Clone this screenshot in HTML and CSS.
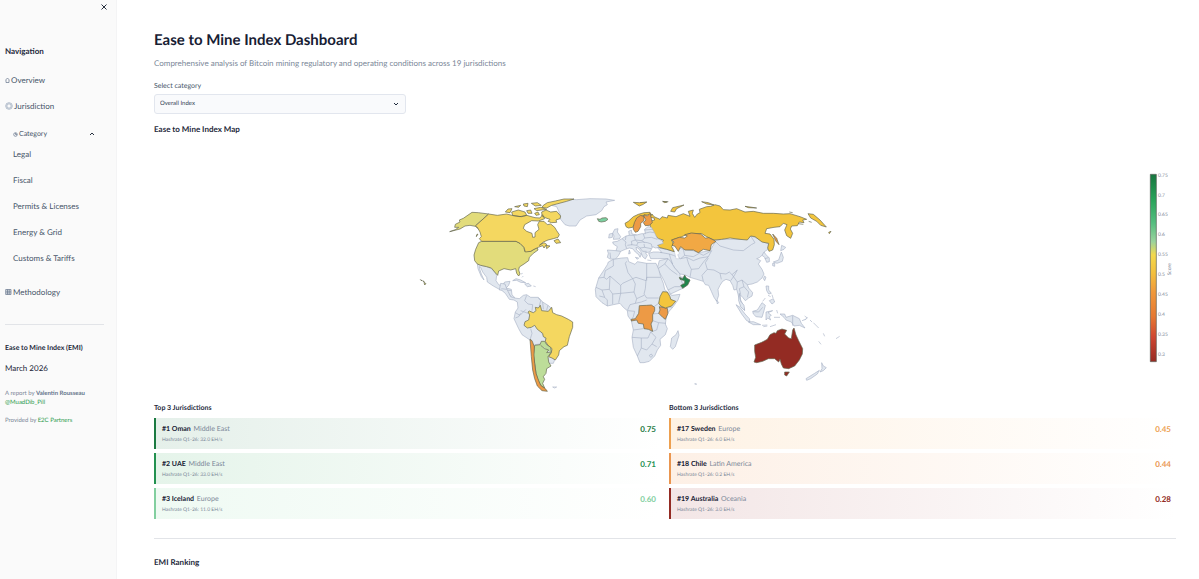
FILE: index.html
```html
<!DOCTYPE html>
<html lang="en">
<head>
<meta charset="utf-8">
<title>Ease to Mine Index Dashboard</title>
<link rel="stylesheet" href="styles.css">
</head>
<body>
<div class="app">
<aside class="sidebar">
  <button class="close" type="button" aria-label="Close sidebar"><svg viewBox="0 0 8 8" width="8" height="8"><path d="M1.5 1.5 6.5 6.5M6.5 1.5 1.5 6.5"/></svg></button>
  <h2 class="side-title">Navigation</h2>
  <nav class="nav">
    <a href="#overview"><svg class="ico" viewBox="0 0 5 8" width="5" height="8"><path d="M.5 4.2 2.5 2l2 2.200M1 4v2.500h3V4"/></svg>Overview</a>
    <a href="#jurisdiction"><svg class="ico ring" viewBox="0 0 8 8" width="8" height="8"><circle cx="4" cy="4" r="3.300"/><circle cx="4" cy="4" r="2.200"/></svg>Jurisdiction</a>
    <details class="group" open>
      <summary><svg class="ico" viewBox="0 0 5 8" width="5" height="8"><circle cx="2.500" cy="4.500" r="1.800"/><path d="M2.500 3v1.500h1.500"/></svg>Category<svg class="chev" viewBox="0 0 6 6" width="6" height="6"><path d="M1 4 3 2l2 2"/></svg></summary>
      <a href="#legal">Legal</a>
      <a href="#fiscal">Fiscal</a>
      <a href="#permits">Permits &amp; Licenses</a>
      <a href="#energy">Energy &amp; Grid</a>
      <a href="#customs">Customs &amp; Tariffs</a>
    </details>
    <a href="#methodology"><svg class="ico" viewBox="0 0 7 8" width="7" height="8"><path d="M.7 1.500h5.300v5H.7zM2.500 1.500v5M4.200 1.500v5M.7 3.200H6M.7 4.900H6"/></svg>Methodology</a>
  </nav>
  <hr>
  <p class="about"><strong>Ease to Mine Index (EMI)</strong></p>
  <p class="about">March 2026</p>
  <p class="credit">A report by <b>Valentin Rousseau</b><br><a href="#author">@MuadDib_Pill</a></p>
  <p class="credit provided">Provided by <a href="#partners">E2C Partners</a></p>
</aside>

<main class="main">
  <h1>Ease to Mine Index Dashboard</h1>
  <p class="lead">Comprehensive analysis of Bitcoin mining regulatory and operating conditions across 19 jurisdictions</p>
  <label class="label" for="category">Select category</label>
  <div class="select">
    <select id="category"><option>Overall Index</option></select>
    <svg viewBox="0 0 6 6" width="6" height="6"><path d="M1 2l2 2 2-2"/></svg>
  </div>
  <h2 class="section">Ease to Mine Index Map</h2>

  <svg class="map" viewBox="462 420 3066 774" role="img" aria-label="World map of index scores">
    <defs>
      <linearGradient id="scale" x1="0" y1="0" x2="0" y2="1">
        <stop offset="0" stop-color="#17753f"/><stop offset=".13" stop-color="#27a258"/><stop offset=".26" stop-color="#55be7f"/><stop offset=".36" stop-color="#9bd39d"/><stop offset=".43" stop-color="#f3d94d"/><stop offset=".53" stop-color="#f3bf3d"/><stop offset=".63" stop-color="#f0983b"/><stop offset=".76" stop-color="#e67832"/><stop offset=".87" stop-color="#cf4631"/><stop offset="1" stop-color="#962a22"/>
      </linearGradient>
    </defs>

    <!-- Asia -->
    <g transform="translate(1920 570)">
      <path class="land" d="M48 168 60 175 80 178 102 184 112 172 130 178 160 182 175 188 210 182 228 152 245 148 300 148 332 138 350 144 372 156 386 162 384 178 372 186 378 194 388 204 388 215 380 217 374 202 366 196 358 203 350 206 362 212 355 222 366 238 372 252 366 264 352 276 336 282 322 284 326 294 338 308 336 318 326 324 316 332 308 322 300 314 302 330 308 342 314 360 304 350 298 332 294 312 290 298 282 300 278 286 270 272 258 268 248 274 240 286 234 298 236 316 230 334 222 322 214 304 206 286 196 284 190 274 170 268 150 262 134 254 120 252 104 234 92 214 82 206 52 206 32 206 26 190 40 186 56 186 66 188Z"/>
      <path class="land" d="M58 212 84 206 92 214 104 234 120 252 120 260 130 262 150 270 142 285 128 295 92 312 84 300 72 272 60 250 52 234Z"/>
      <path class="line" d="M60 187 88 192 92 206M88 192 100 196 122 206 140 202 160 212 180 204 205 200 215 182M92 206 98 222M150 262 154 238 146 222 140 202M154 238 176 236 192 214 205 200M190 274 186 256 202 238 196 218 205 204M202 238 222 240 240 250 258 252 268 246 276 254 292 240 282 258 272 272M240 250 244 268M222 150 240 168 280 180 310 182 334 164 345 158 332 138M130 178 134 196 160 200 178 190 190 196 215 182M276 254 292 276 290 298M292 276 306 270 322 284M306 270 312 290 326 306 322 322M312 290 298 296 302 314M366 196 372 186M374 206 385 203M54 236 74 222 92 240 112 254M74 222 84 206M84 300 104 290 128 290M120 262 128 282M178 190 170 178M134 196 122 206"/>
      <path class="sea" d="M98 174 106 166 116 172 112 180 119 190 113 194 118 206 108 206 105 192Z"/>
      <path class="c yl" d="M36 72 42 80 60 88 66 80 82 84 84 76 108 80 130 71 150 79 145 64 160 60 157 70 164 82 172 72 180 68 178 58 200 50 212 49 225 44 240 48 250 59 270 60 290 56 315 66 340 64 370 70 400 70 430 72 450 71 480 80 500 88 488 90 492 98 478 96 472 107 455 108 451 117 458 130 452 145 440 137 434 120 441 104 430 100 420 110 402 112 380 116 375 130 390 132 402 148 403 164 398 180 387 184 383 174 386 160 366 156 345 140 332 138 322 150 300 148 270 144 245 148 222 150 200 140 185 131 150 130 125 140 95 150 100 162 95 170 103 185 80 178 60 173 48 168 65 160 70 150 55 146 42 132 32 112 28 96 36 92 44 90 42 84 30 82Z"/>
      <path class="c yl" d="M92 64 98 53 132 45 110 56 104 66ZM185 35 205 38 222 45 200 42ZM315 49 330 51 350 54 325 53ZM504 71 520 73 540 90 559 111 542 106 530 94 512 84ZM506 94 515 97M475 101 490 103M448 66 458 68M0 38 20 37M68 34 82 36 74 38ZM566 127 573 124 568 131Z"/>
      <path class="c or" d="M398 132 410 145 417 164 408 154Z"/>
      <path class="c kz" d="M95 150 118 142 134 144 142 138 134 134 155 129 182 132 196 144 206 143 228 154 214 164 210 182 190 178 175 188 160 180 135 180 122 170 115 184 104 168 96 166 102 156Z"/>
      <path class="c om" d="M118 262 128 266 134 255 139 264 150 270 143 285 128 295 122 286 134 280 134 272 120 268Z"/>
      <path class="land" d="M425 166 437 172 432 178 422 182ZM424 186 430 202 427 214 411 220 400 216 416 210ZM398 220 404 220 404 229 398 227ZM374 258 378 262 374 272 370 266Z"/>
    </g>

    <!-- Europe and Greenland -->
    <g transform="translate(1710 570)">
      <path class="land" d="M0 28-30 34-60 38-56 46-40 50-30 72-28 88-15 104-2 108 18 108 30 90 50 78 78 74 95 62 102 50 112 44 108 36 134 31 108 27 60 26 20 29Z"/>
      <path class="c ic" d="M82 86 90 88 96 84 108 83 114 88 106 94 94 96 86 94Z"/>
      <path class="c yl" d="M190 37 208 38 230 36 220 43 208 48ZM278 35 295 35M165 100 175 94 190 80 205 73 222 68 240 67 244 74 225 75 210 80 198 92 193 104 188 112 175 114 168 110Z"/>
      <path class="c or" d="M190 110 193 98 200 84 212 76 222 80 222 92 212 100 212 110 204 124 196 127 190 118ZM222 74 232 78 240 70 244 85 247 98 238 106 226 107 220 98 228 90 222 80Z"/>
      <path class="land" d="M112 180 138 182 142 170 130 162 128 156 142 154 156 146 168 138 178 136 176 124 184 120 186 132 200 135 215 131 226 131 224 118 234 110 244 112 252 125 262 145 276 152 280 160 262 166 268 172 256 174 248 170 243 180 240 186 226 188 232 196 226 207 218 200 212 184 204 174 198 172 200 180 214 192 210 202 206 194 196 186 188 176 178 174 166 178 152 184 146 196 136 208 120 207 112 202 115 190ZM130 148 132 138 128 130 134 118 144 116 142 126 152 140 148 147ZM118 132 128 130 127 142 116 144ZM178 180 181 190 176 192ZM196 202 206 204 202 208ZM232 210 244 212"/>
      <path class="line" d="M138 182 152 184M120 188 122 205M156 146 168 156 166 164 170 176M168 138 166 150M178 136 192 136 196 150 184 154 186 164 172 166M192 136 200 134M196 150 216 152 224 144 220 132M196 150 204 158 218 156 232 158 244 162 246 172M184 164 200 166 204 158M200 166 210 174 224 172 222 162M224 144 244 142 262 148M224 130 240 126 252 128M222 120 248 118M224 172 244 176M216 152 224 158M210 174 218 184 230 184"/>
    </g>

    <!-- Africa -->
    <g transform="translate(1740 750)">
      <path class="land" d="M85 36 100 28 125 24 143 23 146 35 165 43 172 35 200 40 228 40 236 58 242 80 250 100 254 118 266 130 276 136 300 133 294 150 278 172 262 190 258 208 256 222 262 236 256 254 240 268 242 286 232 300 224 318 208 334 192 338 180 338 172 318 160 292 156 262 160 240 154 212 144 198 142 182 130 172 120 160 100 164 82 168 66 158 48 140 46 118 56 84 72 60 82 44ZM275 264 288 254 294 242 297 256 286 290 278 298 271 290ZM344 401 350 402"/>
      <path class="line" d="M56 84 72 82 76 62 100 48 100 28M72 82 80 88 90 78 122 106 128 100 158 86 144 68 136 40 140 34M90 78 88 118 66 120 48 112M158 86 168 82 198 92 200 84V40M200 92 200 82H242M198 92 196 116 192 132 200 144 236 144M158 86 166 102 162 126 170 146 166 160 150 164 142 182M162 126 122 130 122 106M122 130 116 158M88 118 98 132 98 162M66 120 74 142 82 150 82 168M98 132 122 130M58 138 74 142M170 146 192 136M166 160 184 156 200 150M222 170 236 160M218 192 238 190 256 208M218 212 236 218 258 220M156 262 184 264 204 264 212 246 230 240 236 218M184 264 184 294 172 318M184 294 200 300 216 282 228 262 212 246M216 282 230 290M160 240 190 236M144 182 164 184 160 200 154 210M242 168 278 172M208 316 214 312 218 318 212 322Z"/>
      <path class="c or" d="M178 167 200 166 214 165 224 172 224 182 218 194 218 212 213 222 218 244 205 238 192 236 190 222 175 220 170 210 154 213 154 208 166 206 176 190ZM238 170 262 175 264 190 256 208 248 202 236 190 240 180Z"/>
      <path class="c yl" d="M236 160 240 140 248 125 262 126 270 140 272 148 287 154 275 168 256 174 242 168Z"/>
    </g>

    <!-- North America -->
    <g transform="translate(1230 570)">
      <path class="land" d="M202 222 212 226 230 230 244 236 254 246 260 256 258 272 266 284 276 288 284 276 300 274 296 286 288 294 304 298 306 315 314 322 308 328 296 310 285 304 268 298 250 288 232 276 230 262 218 246 212 232 208 230 210 240 214 252 222 270 214 260 204 236ZM308 272 318 266 332 270 347 278 332 277 320 271ZM344 282 356 280 364 288 352 290ZM370 288 377 290M333 252 338 250M336 262 340 258"/>
      <path class="line" d="M272 297 276 290 288 288M288 300 304 302"/>
      <path class="c us" d="M236 72 205 68 186 67 160 85 148 90 150 96 136 103 134 112 146 112 136 119 119 125 150 117 165 108 180 106 196 109 212 122 198 106ZM215 154 318 154 330 160 342 172 344 184 362 184 372 178 382 173 384 180 370 190 358 202 356 212 342 222 328 231 326 240 330 252 326 258 320 250 317 236 302 240 282 236 266 243 263 256 254 246 244 234 230 230 212 226 202 222 194 212 192 195 197 178 206 158ZM31 269 36 272 33 271ZM38 272 43 275 40 275ZM42 277 48 281 44 285Z"/>
      <path class="c ca" d="M236 72 262 76 290 72 310 77 335 80 350 76 375 83 390 84 398 74 404 86 385 93 365 92 344 104 340 115 350 124 366 130 368 142 375 141 375 128 387 118 383 104 388 94 402 94 412 104 422 102 434 112 440 122 448 134 444 142 430 146 414 150 400 156 388 166 402 158 410 163 402 174 398 167 385 172 372 178 362 184 346 186 342 172 330 160 318 154 215 154 208 146 214 140 210 126 202 112 196 108ZM395 66 408 60 422 66 440 64 452 78 450 86 438 90 440 97 424 98 414 94 420 88 408 84 396 78ZM305 66 325 60 345 66 350 76 330 80 308 76ZM286 66 294 57 306 56 300 68ZM400 46 412 38 436 33 462 27 492 27 470 34 440 42 425 46 410 54 396 52ZM372 56 392 52 410 58 380 62ZM432 152 444 147 452 158 438 160ZM350 62 362 60 366 70 354 70ZM314 50 332 46 326 52ZM340 42 354 40 352 50 342 48ZM364 40 382 38 394 46 376 48ZM374 70 384 66 388 74 378 76ZM408 166 420 168 410 176ZM200 134 204 132 199 140Z"/>
    </g>

    <!-- South America -->
    <g transform="translate(1470 840)">
      <path class="land" d="M32 10 45 12 50 26 62 50 74 54 88 56 100 46 110 44 122 52 145 52 158 66 174 76 186 86 180 100 150 150 180 200 184 228 194 240 190 250 178 250 130 205 120 180 96 164 86 146 72 116 76 96 84 84 82 66 72 60 58 58 46 40 34 30 28 30Z"/>
      <path class="line" d="M110 46 104 62 114 72 128 74 126 92M76 98 90 106 108 88M76 114 86 110 92 100M92 92 114 100M122 146 126 160 120 180M145 54 152 62 148 78M158 66 160 88M174 76 170 90M134 194 150 192M34 26 50 28"/>
      <path class="c ca" d="M130 98 118 93 114 96 119 105 116 120 105 125 102 136 112 144 124 142 134 136 142 148 158 160 160 170 168 174 166 184 174 196 186 206 184 218 176 230 186 234 196 240 206 225 208 212 222 200 232 196 238 170 248 142 248 126 235 118 215 108 200 104 188 98 185 82 175 94 155 92 151 76 145 84 136 82 138 92Z"/>
      <path class="c ar" d="M134 196 150 194 154 184 164 184 170 194 182 202 184 216 174 230 176 246 183 258 170 266 168 280 160 290 164 298 158 310 164 324 152 316 144 300 138 280 134 250 130 225ZM152 196 164 206 176 210 170 218 182 216"/>
      <path class="c or" d="M120 178 126 182 133 200 132 225 134 250 138 280 146 302 152 316 168 328 172 334 156 332 142 318 134 296 128 270 124 230Z"/>
      <path class="line" d="M188 321 200 321 194 324Z"/>
    </g>

    <!-- Oceania -->
    <g transform="translate(2070 810)">
      <path class="land" d="M138 104 150 112 165 132 178 146 180 156 170 152 155 132ZM175 156 190 155 212 164 190 164ZM188 124 202 120 216 98 226 106 222 122 216 142 198 140 190 132ZM228 126 248 122 234 128 244 136 238 140 242 150 233 144 228 150ZM216 166 232 165M220 170 232 168M240 170 258 164M260 120 263 130M252 142 270 142M270 132 284 132 288 142 308 136 328 146 334 160 345 174 328 166 312 168 304 156 288 150 282 142ZM336 152 348 148 352 142M344 138 352 144M360 150 366 156M370 158 386 174M386 214 393 223M400 190 404 199M438 206 449 199M395 278 400 288 409 293 400 302 390 306 396 296ZM388 301 382 312 362 326 350 331 348 326 374 310ZM228 48 236 48 236 60 244 70 236 72 230 62ZM234 76 242 80M246 74 249 84M226 84 218 94M238 92 250 86 254 96 246 102ZM80 90 86 98 82 102ZM148 70 152 94 162 106 164 122 152 110 146 92ZM14 342 20 343"/>
      <path class="line" d="M308 137V167M190 125 206 126 218 112"/>
      <path class="c au" d="M194 225 215 217 232 208 240 194 252 188 258 190 262 182 276 177 290 181 284 192 296 204 304 206 308 180 312 174 318 195 326 212 338 236 337 252 328 270 314 288 296 296 280 294 274 282 270 268 266 276 254 266 235 266 218 274 200 278 192 276 197 262 194 244ZM284 306 298 306 290 318 284 315Z"/>
    </g>

    <!-- Colour scale -->
    <rect class="bar" x="3451" y="523" width="18" height="562"/>
    <g class="ticks">
      <text x="3474" y="530">0.75</text><text x="3474" y="590">0.7</text><text x="3474" y="649">0.65</text><text x="3474" y="709">0.6</text><text x="3474" y="769">0.55</text><text x="3474" y="828">0.5</text><text x="3474" y="888">0.45</text><text x="3474" y="948">0.4</text><text x="3474" y="1007">0.35</text><text x="3474" y="1067">0.3</text>
      <text transform="translate(3513 826) rotate(-90)">Score</text>
    </g>
  </svg>

  <div class="columns">
    <section class="rank">
      <h3>Top 3 Jurisdictions</h3>
      <article class="card oman"><div><p class="name"><b>#1 Oman</b> Middle East</p><p class="hash">Hashrate Q1-26: 32.0 EH/s</p></div><span class="score">0.75</span></article>
      <article class="card uae"><div><p class="name"><b>#2 UAE</b> Middle East</p><p class="hash">Hashrate Q1-26: 33.0 EH/s</p></div><span class="score">0.71</span></article>
      <article class="card iceland"><div><p class="name"><b>#3 Iceland</b> Europe</p><p class="hash">Hashrate Q1-26: 11.0 EH/s</p></div><span class="score">0.60</span></article>
    </section>
    <section class="rank">
      <h3>Bottom 3 Jurisdictions</h3>
      <article class="card sweden"><div><p class="name"><b>#17 Sweden</b> Europe</p><p class="hash">Hashrate Q1-26: 6.0 EH/s</p></div><span class="score">0.45</span></article>
      <article class="card chile"><div><p class="name"><b>#18 Chile</b> Latin America</p><p class="hash">Hashrate Q1-26: 0.2 EH/s</p></div><span class="score">0.44</span></article>
      <article class="card australia"><div><p class="name"><b>#19 Australia</b> Oceania</p><p class="hash">Hashrate Q1-26: 3.0 EH/s</p></div><span class="score">0.28</span></article>
    </section>
  </div>
  <hr class="rule">
  <h2 class="section ranking">EMI Ranking</h2>
</main>
</div>
</body>
</html>
```
FILE: styles.css
```css
* { box-sizing: border-box; }
body { margin: 0; font-family: Lato, Roboto, sans-serif; font-size: 8px; line-height: 12px; color: #1e293b; background: #fff; text-rendering: geometricPrecision; }
h1, h2, h3, p { margin: 0; }
a { color: inherit; text-decoration: none; }
hr { width: 100%; height: 1px; margin: 0; border: 0; background: #e2e4e8; }
svg { flex: none; }

.app { display: flex; min-height: 100vh; }

.sidebar { flex: 0 0 117px; padding: 0 12px 0 5px; background: #fafafa; border-right: 1px solid #f4f4f5; }
.close { display: flex; align-items: center; justify-content: center; width: 14px; height: 14px; margin: 0 -7px 0 auto; padding: 0; border: 0; background: none; }
.close svg, .chev { fill: none; stroke: #27303f; stroke-width: 1; }
.side-title { margin-top: 31px; font-size: 8px; line-height: 12px; font-weight: 700; }
.nav { margin-top: 10px; color: #475569; }
.nav a { display: flex; align-items: center; gap: 1px; height: 26px; }
.ico { fill: none; stroke: #64748b; stroke-width: .7; }
.ring { stroke: #94a3b8; }
.group { margin: 8px 0; }
.group a { padding-left: 8px; }
.group summary { display: flex; align-items: center; gap: 1px; height: 14px; padding: 0 9px 0 8px; font-size: 7px; list-style: none; }
.chev { margin-left: auto; }
.sidebar hr { margin: 19px 0 16px; }
.about { margin-bottom: 8px; white-space: nowrap; font-size: 8px; }
.about strong { font-size: 7px; color: #1e293b; }
.credit { margin-top: 15px; font-size: 6px; line-height: 9px; color: #7b8798; }
.credit b { font-weight: 700; color: #64748b; }
.credit a { color: #2c9a4b; }
.provided { margin-top: 9px; }

.main { flex: 1; min-width: 0; padding: 30px 23px 10px 37px; }
h1 { font-size: 15px; line-height: 20px; font-weight: 700; color: #172033; }
.lead { margin-top: 7px; color: #7b8798; }
.label { display: block; margin-top: 11px; font-size: 7px; color: #475569; }
.select { position: relative; max-width: 252px; margin-top: 2px; }
.select select { display: block; width: 100%; height: 20px; padding: 0 20px 0 5px; appearance: none; border: 1px solid #e2e6ee; border-radius: 3px; background: #f9fafc; color: #334155; font: 6px/12px Lato, Roboto, sans-serif; text-rendering: inherit; }
.select svg { position: absolute; right: 7px; top: 7px; fill: none; stroke: #1e293b; stroke-width: 1; pointer-events: none; }
.section { margin-top: 9px; font-size: 8px; line-height: 12px; font-weight: 700; }

.map { display: block; width: 100%; height: auto; margin-top: 5px; stroke-linejoin: round; }
.land { fill: #e1e7ef; stroke: #a4aec2; stroke-width: 1.800; }
.line { fill: none; stroke: #a4aec2; stroke-width: 1.800; }
.sea { fill: #fff; stroke: #a4aec2; stroke-width: 1; }
.c { stroke: #62654f; stroke-width: 2; }
.yl { fill: #f3c53d; }
.ca { fill: #f4d760; }
.us { fill: #e2dc7b; }
.or { fill: #ed9a45; }
.kz { fill: #f1a844; }
.om { fill: #1f854c; }
.ic { fill: #7bcfa0; }
.ar { fill: #bddd99; }
.au { fill: #932b23; }
.bar { fill: url(#scale); stroke: #565c55; stroke-width: 2; }
.ticks { font-size: 15px; fill: #7b8798; }

.columns { display: grid; grid-template-columns: 1fr 1fr; gap: 8px; margin-top: 4px; }
.rank { display: grid; gap: 4px; }
h3 { font-size: 7px; line-height: 12px; font-weight: 700; }
.card { display: flex; justify-content: space-between; height: 31px; padding: 5px 5px 3px 6px; border-left: 2px solid; }
.name { font-size: 7px; line-height: 12px; color: #7b8798; }
.name b { margin-right: 1px; color: #172033; }
.hash { font-size: 5px; line-height: 10px; color: #7b8798; }
.score { font-size: 8px; line-height: 12px; font-weight: 700; }
.oman { color: #1b7a41; background: linear-gradient(90deg, #e5f0ea, #fff); }
.uae { color: #239150; background: linear-gradient(90deg, #e5f4ea, #fff); }
.iceland { color: #82cf9f; background: linear-gradient(90deg, #effaf3, #fff); }
.sweden { color: #eda050; background: linear-gradient(90deg, #fef2e4, #fff); }
.chile { color: #ea9650; background: linear-gradient(90deg, #fdf0e6, #fff); }
.australia { color: #932b23; background: linear-gradient(90deg, #f3e6e6, #fff); }
.rule { margin-top: 19px; }
.ranking { margin-top: 17px; }
```
